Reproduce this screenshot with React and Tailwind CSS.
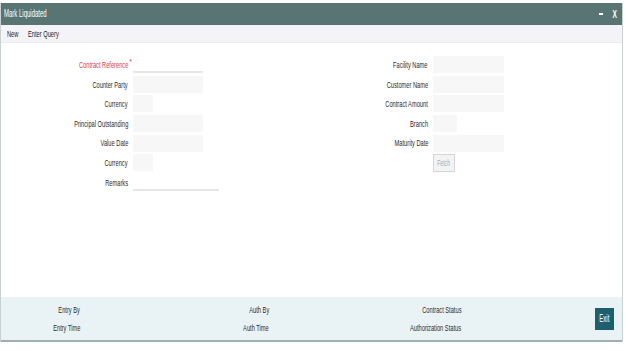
import React from "react";

const T = ({ children, className = "" }) => (
	<span className={`inline-block scale-x-[0.6] whitespace-nowrap ${className}`}>{children}</span>
);

const Field = ({ label, width = "w-[70px]", required, underline }) => (
	<div className="flex items-center h-[19.6px]">
		<div className="relative w-[127px] text-right">
			<T className={`origin-right ${required ? "text-[#d63b3f]" : "text-[#2b2b2b]"}`}>{label}</T>
			{required && (
				<span className="absolute -right-[4px] -top-[2px] text-[7px] text-[#d63b3f]">*</span>
			)}
		</div>
		{underline ? (
			<div className={`ml-[5px] h-[17px] ${width} border-b-2 border-[#e6e6e6] bg-white`}></div>
		) : (
			<div className={`ml-[5px] h-[17px] ${width} bg-[#f7f7f7]`}></div>
		)}
	</div>
);

export default function App() {
	return (
		<div
			className="w-[635px] h-[351px] bg-white overflow-hidden text-[9.5px] leading-none"
			style={{ fontFamily: '"Liberation Sans", Arial, sans-serif' }}>
			<div className="w-[623px] h-[339px] mt-[3px] flex flex-col border-l border-r border-[#c9d0d2]">
				{/* title bar */}
				<div className="h-[22px] bg-[#587473] flex items-center justify-between pl-[3px] pr-[4px] text-white">
					<T className="origin-left text-[10px]">Mark Liquidated</T>
					<div className="flex items-center gap-[8px] font-bold text-[11px]">
						<span className="inline-block w-[4px] h-[2px] bg-white"></span>
						<T className="origin-center">X</T>
					</div>
				</div>
				{/* toolbar */}
				<div className="h-[18px] bg-[#f4f4f8] flex items-center gap-[6px] pl-[6px] text-[#222] border-b border-[#ececf0]">
					<T className="origin-left">New</T>
					<T className="origin-left -ml-[4px]">Enter Query</T>
				</div>
				{/* form */}
				<div className="flex-1 flex pt-[12px]">
					<div className="w-[300px] flex flex-col">
						<Field label="Contract Reference" required underline />
						<Field label="Counter Party" />
						<Field label="Currency" width="w-[20px]" />
						<Field label="Principal Outstanding" />
						<Field label="Value Date" />
						<Field label="Currency" width="w-[20px]" />
						<Field label="Remarks" width="w-[86px]" underline />
					</div>
					<div className="flex flex-col">
						<Field label="Facility Name" width="w-[71px]" />
						<Field label="Customer Name" width="w-[71px]" />
						<Field label="Contract Amount" width="w-[71px]" />
						<Field label="Branch" width="w-[24px]" />
						<Field label="Maturity Date" width="w-[71px]" />
						<div className="flex items-center h-[19.6px] pl-[132px]">
							<button className="w-[22px] h-[18px] bg-[#f3f3f3] border border-[#d6d6d6] text-[#aaa] flex items-center justify-center">
								<T className="origin-center text-[8.5px]">Fetch</T>
							</button>
						</div>
					</div>
				</div>
				{/* footer */}
				<div className="h-[45px] bg-[#e9f3f5] border-b-2 border-[#9fb0b3] flex items-center text-[#2b2b2b]">
					<div className="w-[79px] flex flex-col items-end gap-[9px]">
						<T className="origin-right">Entry By</T>
						<T className="origin-right">Entry Time</T>
					</div>
					<div className="w-[189px] flex flex-col items-end gap-[9px]">
						<T className="origin-right">Auth By</T>
						<T className="origin-right">Auth Time</T>
					</div>
					<div className="w-[192px] flex flex-col items-end gap-[9px]">
						<T className="origin-right">Contract Status</T>
						<T className="origin-right">Authorization Status</T>
					</div>
					<div className="flex-1 flex justify-end pr-[8px]">
						<button className="w-[19px] h-[22px] bg-[#1d5f6d] text-white flex items-center justify-center">
							<T className="origin-center text-[10px]">Exit</T>
						</button>
					</div>
				</div>
			</div>
		</div>
	);
}
